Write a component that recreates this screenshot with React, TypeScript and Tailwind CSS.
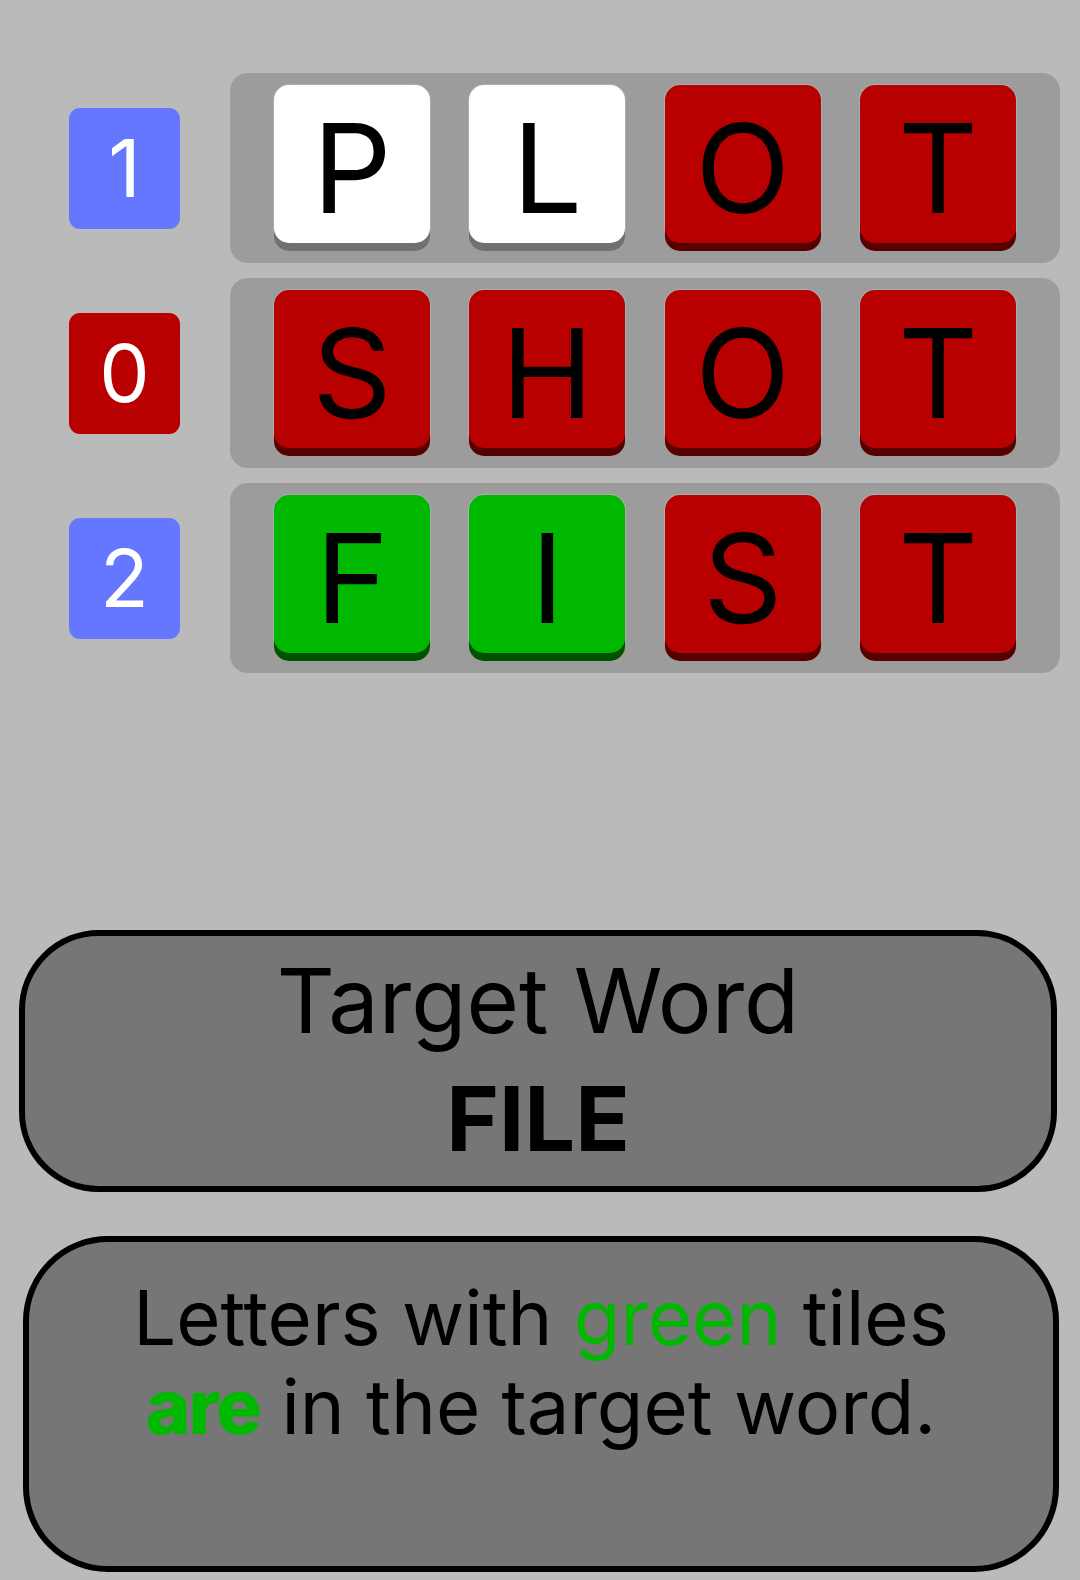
import React from "react";

type TileColor = "white" | "red" | "green";

const tileClass: Record<TileColor, string> = {
  white: "bg-white shadow-[0_8px_0_#707070,0_0_0_1px_#a6b0b0]",
  red: "bg-[#b80000] shadow-[0_8px_0_#560000,0_0_0_1px_#a6b0b0]",
  green: "bg-[#00b800] shadow-[0_8px_0_#005200,0_0_0_1px_#a6b0b0]",
};

const rows: { score: number; badge: "blue" | "red"; tiles: [string, TileColor][] }[] = [
  { score: 1, badge: "blue", tiles: [["P", "white"], ["L", "white"], ["O", "red"], ["T", "red"]] },
  { score: 0, badge: "red", tiles: [["S", "red"], ["H", "red"], ["O", "red"], ["T", "red"]] },
  { score: 2, badge: "blue", tiles: [["F", "green"], ["I", "green"], ["S", "red"], ["T", "red"]] },
];

function Tile({ letter, color }: { letter: string; color: TileColor }) {
  return (
    <div
      className={`w-[156px] h-[158px] rounded-[15px] flex items-center justify-center text-black text-[124px] leading-none pt-[8px] ${tileClass[color]}`}
    >
      {letter}
    </div>
  );
}

export default function App() {
  return (
    <div
      className="w-[1080px] h-[1580px] bg-[#bababa] overflow-hidden flex flex-col"
      style={{ fontFamily: "Inter, 'Noto Sans', sans-serif" }}
    >
      <div className="flex flex-col gap-[15px] pt-[73px] pl-[69px]">
        {rows.map((row, i) => (
          <div key={i} className="flex items-center gap-[50px]">
            <div
              className={`w-[111px] h-[121px] rounded-[11px] flex items-center justify-center text-white text-[80px] leading-none ${
                row.badge === "blue" ? "bg-[#6577ff]" : "bg-[#b80000]"
              }`}
            >
              {row.score}
            </div>
            <div className="w-[830px] h-[190px] bg-[#9c9c9c] rounded-[18px] flex items-start justify-between px-[44px] pt-[12px]">
              {row.tiles.map(([l, c], j) => (
                <Tile key={j} letter={l} color={c} />
              ))}
            </div>
          </div>
        ))}
      </div>

      <div className="mt-[257px] ml-[19px] w-[1038px] h-[262px] border-[6px] border-black rounded-[80px] bg-[#767676] flex flex-col items-center pt-[6px] text-black text-[90px] leading-[118px]">
        <div>Target Word</div>
        <div className="font-bold">FILE</div>
      </div>

      <div className="mt-[44px] ml-[23px] w-[1036px] h-[336px] border-[6px] border-black rounded-[85px] bg-[#767676] pt-[31px] text-black text-[76px] leading-[89px] text-center">
        <div>
          Letters with <span className="text-[#00b800]">green</span> tiles
        </div>
        <div>
          <span className="text-[#00b800] font-extrabold tracking-[-2px]">are</span> in the target word.
        </div>
      </div>
    </div>
  );
}
